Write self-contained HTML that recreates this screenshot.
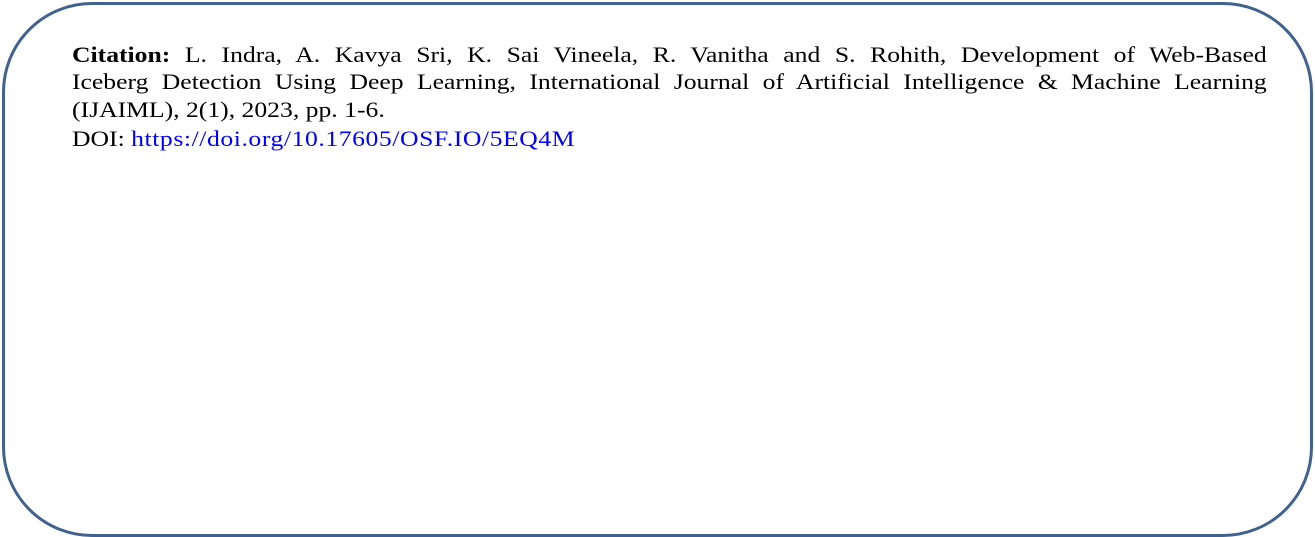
<!DOCTYPE html>
<html><head><style>
html,body{margin:0;padding:0;background:#fff;}
.box{position:absolute;left:2px;top:2px;width:1305px;height:529px;border:3px solid #41628e;border-radius:90px;}
.l{position:absolute;left:72px;width:1048px;font-family:"Liberation Serif",serif;font-size:22.5px;line-height:28px;color:#000;white-space:nowrap;transform:scaleX(1.14);transform-origin:0 0;}
.j{text-align:justify;text-align-last:justify;}
a{color:#0000ff;text-decoration:none;letter-spacing:0.5px;}
</style></head><body>
<div class="box"></div>
<div class="l j" style="top:41px"><b>Citation:</b> L. Indra, A. Kavya Sri, K. Sai Vineela, R. Vanitha and S. Rohith, Development of Web-Based</div>
<div class="l j" style="top:68px">Iceberg Detection Using Deep Learning, International Journal of Artificial Intelligence &amp; Machine Learning</div>
<div class="l" style="top:96px">(IJAIML), 2(1), 2023, pp. 1-6.</div>
<div class="l" style="top:125px">DOI: <a>https://doi.org/10.17605/OSF.IO/5EQ4M</a></div>
</body></html>
